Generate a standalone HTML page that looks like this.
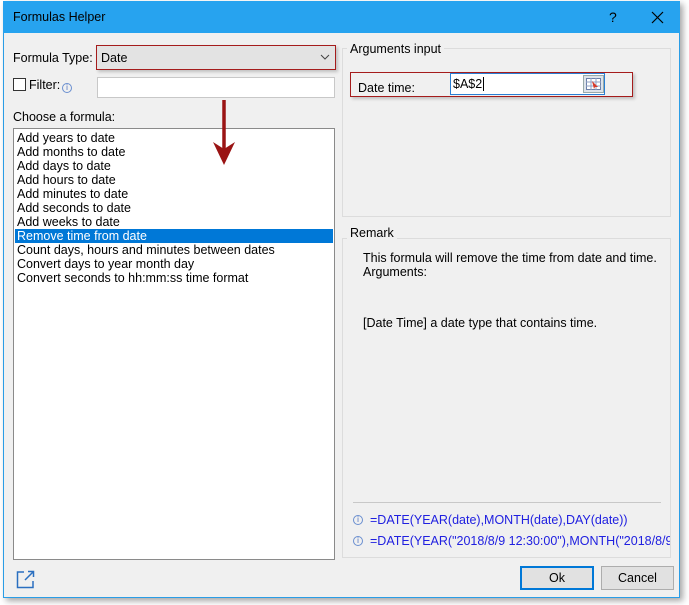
<!DOCTYPE html>
<html><head><style>
*{margin:0;padding:0;box-sizing:border-box}
body{width:689px;height:605px;background:#fff;font-family:"Liberation Sans",sans-serif;font-size:12.5px;color:#000;position:relative;overflow:hidden}
.a{position:absolute;white-space:nowrap}
#win{position:absolute;left:3px;top:1px;width:677px;height:597px;background:#f0f0f0;border:1px solid #2a9de6;box-shadow:3px 3px 6px rgba(0,0,0,.35)}
#tb{position:absolute;left:3px;top:1px;width:677px;height:32px;background:#27a3ef}
.grp{border:1px solid #dcdcdc;position:absolute}
.li{position:absolute;left:17px;height:14px;line-height:14px}
.blue{color:#2020e0;font-size:12.5px}
.info{position:absolute;width:10px;height:10px;border:1px solid #6a8fd0;border-radius:50%;font-size:8px;line-height:8px;text-align:center;color:#4a70c0}
</style></head><body>
<div id="win"></div>
<div id="tb"></div>
<div class="a" style="left:13px;top:10px;font-size:12.5px">Formulas Helper</div>
<div class="a" style="left:609px;top:9px;font-size:14px">?</div>
<svg class="a" style="left:651px;top:11px" width="13" height="13"><path d="M1 1L12 12M12 1L1 12" stroke="#000" stroke-width="1.2"/></svg>

<div class="a" style="left:13px;top:51px">Formula Type:</div>
<div class="a" style="left:96px;top:45px;width:240px;height:25px;border:1px solid #a51c1c;background:#e3e3e3;box-shadow:2px 2px 3px rgba(0,0,0,.2)"></div>
<div class="a" style="left:101px;top:51px">Date</div>
<svg class="a" style="left:320px;top:54px" width="10" height="7"><path d="M1 1L5 5L9 1" stroke="#444" fill="none"/></svg>

<div class="a" style="left:13px;top:78px;width:13px;height:13px;border:1px solid #333;background:#fff"></div>
<div class="a" style="left:29px;top:78px">Filter:</div>
<div class="info" style="left:62px;top:83px">i</div>
<div class="a" style="left:97px;top:77px;width:238px;height:21px;border:1px solid #c8c8c8;background:#fff"></div>

<div class="a" style="left:13px;top:110px">Choose a formula:</div>
<div class="a" style="left:13px;top:128px;width:322px;height:432px;border:1px solid #8a8a8a;background:#fff"></div>
<div class="a" style="left:15px;top:229px;width:318px;height:14px;background:#0078d7"></div>
<div class="li" style="top:131px">Add years to date</div>
<div class="li" style="top:145px">Add months to date</div>
<div class="li" style="top:159px">Add days to date</div>
<div class="li" style="top:173px">Add hours to date</div>
<div class="li" style="top:187px">Add minutes to date</div>
<div class="li" style="top:201px">Add seconds to date</div>
<div class="li" style="top:215px">Add weeks to date</div>
<div class="li" style="top:229px;color:#fff">Remove time from date</div>
<div class="li" style="top:243px">Count days, hours and minutes between dates</div>
<div class="li" style="top:257px">Convert days to year month day</div>
<div class="li" style="top:271px">Convert seconds to hh:mm:ss time format</div>
<svg class="a" style="left:210px;top:100px" width="28" height="70"><path d="M14 0V50" stroke="#9a1414" stroke-width="3.5"/><path d="M3 42L14 65L25 42L14 49Z" fill="#9a1414"/></svg>

<div class="grp" style="left:342px;top:48px;width:329px;height:169px"></div>
<div class="a" style="left:347px;top:42px;background:#f0f0f0;padding:0 3px">Arguments input</div>
<div class="a" style="left:350px;top:72px;width:283px;height:25px;border:1px solid #a51c1c;box-shadow:2px 2px 3px rgba(0,0,0,.2)"></div>
<div class="a" style="left:358px;top:81px">Date time:</div>
<div class="a" style="left:450px;top:73px;width:155px;height:22px;border:1px solid #2a7fd4;background:#fff"></div>
<div class="a" style="left:453px;top:77px">$A$2</div>
<div class="a" style="left:483px;top:77px;width:1px;height:14px;background:#000"></div>
<div class="a" style="left:583px;top:75px;width:21px;height:18px;background:#dde3ea;border:1px solid #9aa"></div>
<svg class="a" style="left:586px;top:78px" width="15" height="12"><rect x="0.5" y="0.5" width="14" height="11" fill="#fff" stroke="#6b7fa8"/><path d="M0 4H15M0 8H15M5 0V12M10 0V12" stroke="#8fa0c4"/><path d="M6 3L12 9L9 9L8 11Z" fill="#d83a2a"/></svg>

<div class="grp" style="left:342px;top:238px;width:329px;height:320px"></div>
<div class="a" style="left:347px;top:226px;background:#f0f0f0;padding:0 3px">Remark</div>
<div class="a" style="left:363px;top:251px">This formula will remove the time from date and time.</div>
<div class="a" style="left:363px;top:265px">Arguments:</div>
<div class="a" style="left:363px;top:316px">[Date Time] a date type that contains time.</div>
<div class="a" style="left:353px;top:502px;width:308px;height:1px;background:#c8c8c8"></div>
<div class="info" style="left:353px;top:515px">i</div>
<div class="a blue" style="left:370px;top:513px">=DATE(YEAR(date),MONTH(date),DAY(date))</div>
<div class="info" style="left:353px;top:536px">i</div>
<div class="a" style="left:370px;top:534px;width:300px;overflow:hidden"><span class="blue">=DATE(YEAR("2018/8/9 12:30:00"),MONTH("2018/8/9 12:30:00")</span></div>

<svg class="a" style="left:16px;top:569px" width="20" height="20"><path d="M8 3H1.5V18.5H17V12" stroke="#2a6fc0" stroke-width="1.5" fill="none"/><path d="M9 11L17 3M12 2.5H17.5V8" stroke="#2a6fc0" stroke-width="1.5" fill="none"/></svg>
<div class="a" style="left:520px;top:566px;width:74px;height:24px;border:2px solid #0078d7;background:#e1e1e1;text-align:center;line-height:20px">Ok</div>
<div class="a" style="left:601px;top:566px;width:73px;height:24px;border:1px solid #adadad;background:#e1e1e1;text-align:center;line-height:22px">Cancel</div>
</body></html>
